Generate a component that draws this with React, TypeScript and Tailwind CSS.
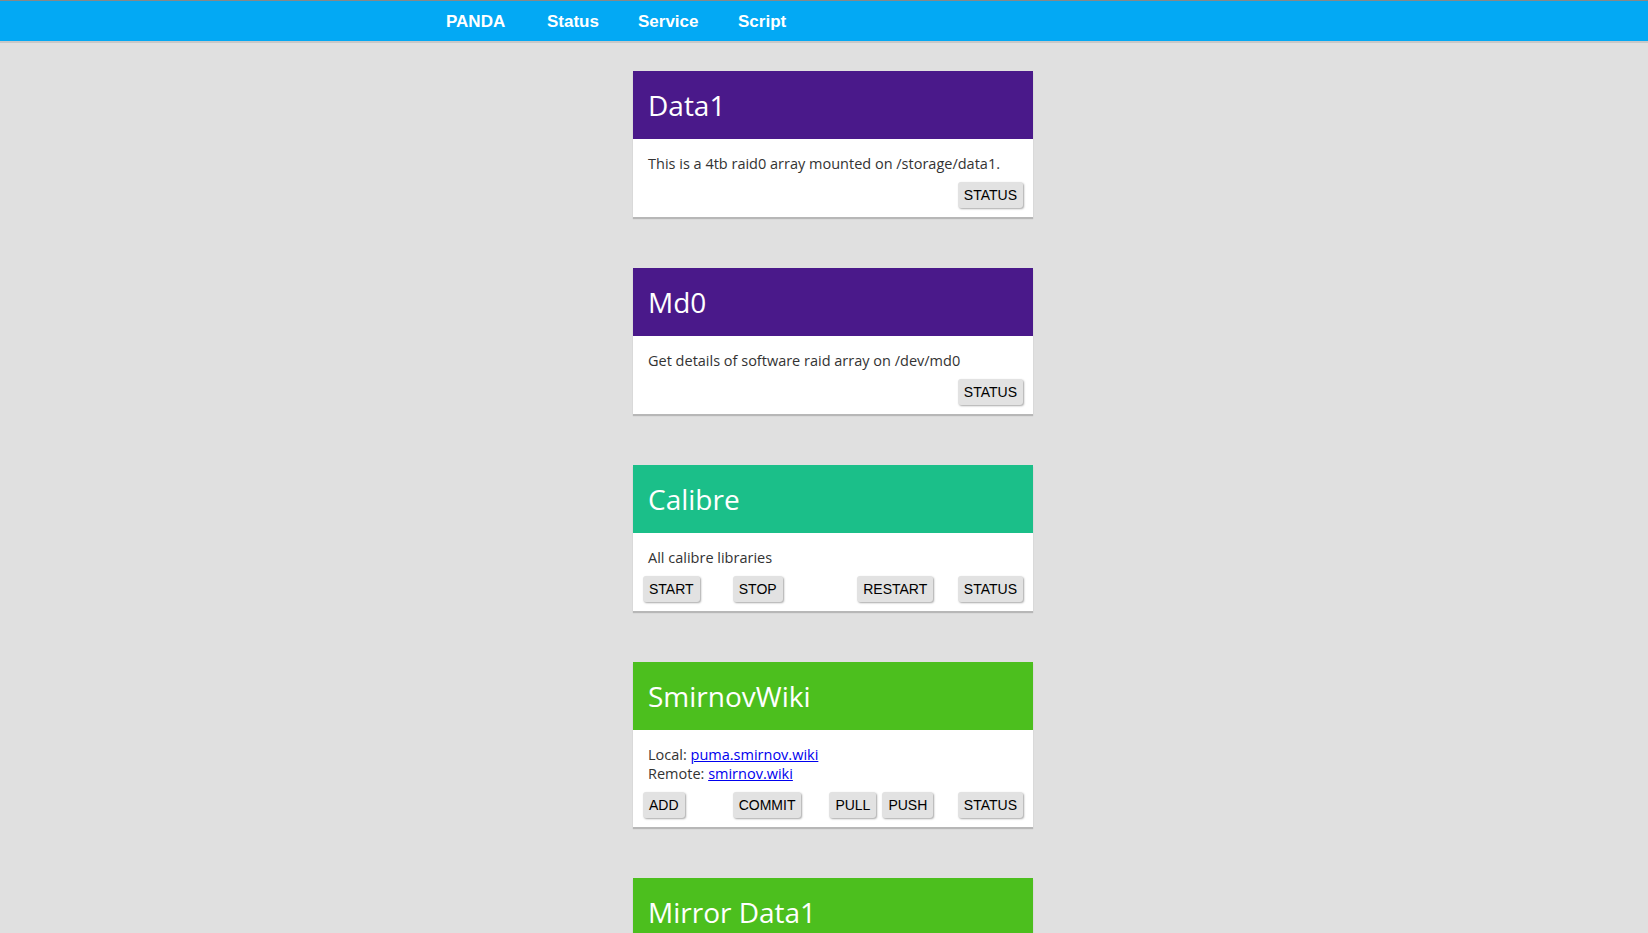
import type { ReactNode } from "react"

const sans = { fontFamily: '"Open Sans", "Noto Sans", sans-serif' }

function Btn({ children }: { children: ReactNode }) {
    return (
        <button
            className="h-[26px] px-[6px] rounded-[3px] bg-[#e2e2e2] text-[14px] text-black leading-none shadow-[1px_1px_2px_rgba(0,0,0,0.35)]"
            style={{ fontFamily: '"Liberation Sans", Arial, sans-serif' }}
        >
            {children}
        </button>
    )
}

function Card({ title, color, children, buttons }: { title: string; color: string; children: ReactNode; buttons: ReactNode }) {
    return (
        <div className="w-[400px] bg-white shadow-[0_2px_1px_rgba(0,0,0,0.18)] mb-[51px]">
            <div className={`h-[68px] flex items-center px-[15px] ${color}`}>
                <h2 className="text-[28px] font-medium text-white" style={sans}>{title}</h2>
            </div>
            <div className="pt-[15px] pb-[9px] px-[10px]">
                <div className="px-[5px] text-[14.5px] leading-[19px] text-[#333]" style={sans}>{children}</div>
                <div className="mt-[9px] flex">{buttons}</div>
            </div>
        </div>
    )
}

export default function App() {
    return (
        <div className="min-h-screen bg-[#e0e0e0]">
            <div className="border-t border-[#888] bg-[#03a9f4] h-[41px] shadow-[0_2px_0_#c8c8c8]">
                <nav className="flex pl-[446px] pt-[1px] h-[40px] items-center text-[17px] font-bold text-white" style={{ fontFamily: '"Liberation Sans", Arial, sans-serif' }}>
                    <a href="#" className="w-[101px]">PANDA</a>
                    <a href="#" className="w-[91px]">Status</a>
                    <a href="#" className="w-[100px]">Service</a>
                    <a href="#">Script</a>
                </nav>
            </div>

            <div className="ml-[633px] pt-[30px]">
                <Card
                    title="Data1"
                    color="bg-[#4a198a]"
                    buttons={<div className="ml-auto"><Btn>STATUS</Btn></div>}
                >
                    This is a 4tb raid0 array mounted on /storage/data1.
                </Card>

                <Card
                    title="Md0"
                    color="bg-[#4a198a]"
                    buttons={<div className="ml-auto"><Btn>STATUS</Btn></div>}
                >
                    Get details of software raid array on /dev/md0
                </Card>

                <Card
                    title="Calibre"
                    color="bg-[#1bbf89]"
                    buttons={
                        <>
                            <div className="w-[90px]"><Btn>START</Btn></div>
                            <div className="w-[100px]"><Btn>STOP</Btn></div>
                            <div className="w-[101px] flex justify-end"><Btn>RESTART</Btn></div>
                            <div className="w-[90px] flex justify-end"><Btn>STATUS</Btn></div>
                        </>
                    }
                >
                    All calibre libraries
                </Card>

                <Card
                    title="SmirnovWiki"
                    color="bg-[#4cbf1e]"
                    buttons={
                        <>
                            <div className="w-[90px]"><Btn>ADD</Btn></div>
                            <div className="w-[100px]"><Btn>COMMIT</Btn></div>
                            <div className="w-[101px] flex justify-end gap-[6px]"><Btn>PULL</Btn><Btn>PUSH</Btn></div>
                            <div className="w-[90px] flex justify-end"><Btn>STATUS</Btn></div>
                        </>
                    }
                >
                    <p>Local: <a href="#" className="text-[#0000ee] underline">puma.smirnov.wiki</a></p>
                    <p>Remote: <a href="#" className="text-[#0000ee] underline">smirnov.wiki</a></p>
                </Card>

                <Card
                    title="Mirror Data1"
                    color="bg-[#4cbf1e]"
                    buttons={<div className="ml-auto"><Btn>STATUS</Btn></div>}
                >
                    Mirror /storage/data1 to the backup array.
                </Card>
            </div>
        </div>
    )
}
